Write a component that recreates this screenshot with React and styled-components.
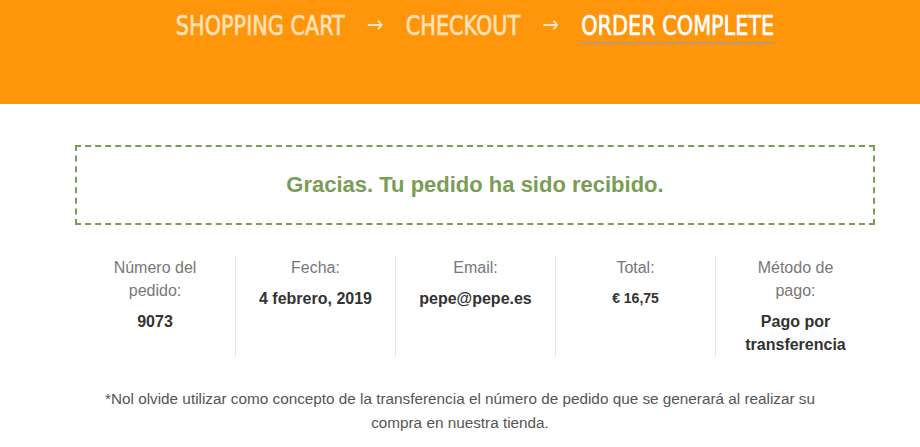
import React from 'react';
import styled, { createGlobalStyle } from 'styled-components';

const GlobalStyle = createGlobalStyle`
  body {
    margin: 0;
    background: #fff;
    font-family: "Liberation Sans", Arial, sans-serif;
  }
`;

const Header = styled.header`
  background: #ff950b;
  height: 104px;
  padding: 10px 0 0 75px;
  box-sizing: border-box;
`;

const Steps = styled.nav`
  width: 800px;
  display: flex;
  justify-content: center;
  align-items: center;
  gap: 26px;
  font-family: "DejaVu Sans Condensed", "DejaVu Sans", sans-serif;
  font-size: 27px;
  text-transform: uppercase;
  transform: scaleX(0.856);
  transform-origin: center;
`;

const Step = styled.span`
  color: ${({ active }) => (active ? '#ffffff' : '#ffe1b8')};
  -webkit-text-stroke: 0.6px currentColor;
  padding-bottom: 1px;
  border-bottom: 2px solid ${({ active }) => (active ? '#b89a78' : 'transparent')};
`;

const Arrow = styled.span`
  color: #ffe4c4;
  font-family: "DejaVu Sans", sans-serif;
  font-size: 23px;
  padding-bottom: 6px;
`;

const Main = styled.main`
  width: 800px;
  margin-left: 75px;
  padding-top: 41px;
`;

const Notice = styled.div`
  border: 2px dashed #7a9d56;
  height: 80px;
  box-sizing: border-box;
  display: flex;
  align-items: center;
  justify-content: center;
  color: #7a9d56;
  font-weight: bold;
  font-size: 22px;
`;

const Details = styled.ul`
  list-style: none;
  margin: 31px 0 0;
  padding: 0;
  display: grid;
  grid-template-columns: repeat(5, 1fr);
`;

const Detail = styled.li`
  text-align: center;
  min-height: 98px;
  padding: 0 20px;
  border-left: ${({ first }) => (first ? 'none' : '1px solid #e4e4e4')};
`;

const Label = styled.div`
  color: #777;
  font-size: 16px;
  line-height: 23px;
`;

const Value = styled.div`
  color: #333;
  font-weight: bold;
  font-size: ${({ small }) => (small ? '14px' : '16px')};
  line-height: 23px;
  margin-top: 8px;
`;

const Note = styled.p`
  margin: 31px 0 0;
  text-align: center;
  color: #555;
  font-size: 15.3px;
  line-height: 24px;
  padding: 0 60px 0 30px;
`;

const items = [
  { label: 'Número del pedido:', value: '9073' },
  { label: 'Fecha:', value: '4 febrero, 2019' },
  { label: 'Email:', value: 'pepe@pepe.es' },
  { label: 'Total:', value: '€ 16,75', small: true },
  { label: 'Método de pago:', value: 'Pago por transferencia' },
];

const App = () => (
  <>
    <GlobalStyle />
    <Header>
      <Steps>
        <Step>Shopping Cart</Step>
        <Arrow>→</Arrow>
        <Step>Checkout</Step>
        <Arrow>→</Arrow>
        <Step active>Order Complete</Step>
      </Steps>
    </Header>
    <Main>
      <Notice>Gracias. Tu pedido ha sido recibido.</Notice>
      <Details>
        {items.map((item, i) => (
          <Detail key={item.label} first={i === 0}>
            <Label>{item.label}</Label>
            <Value small={item.small}>{item.value}</Value>
          </Detail>
        ))}
      </Details>
      <Note>
        *Nol olvide utilizar como concepto de la transferencia el número de pedido que se generará al realizar su compra en nuestra tienda.
      </Note>
    </Main>
  </>
);

export default App;
